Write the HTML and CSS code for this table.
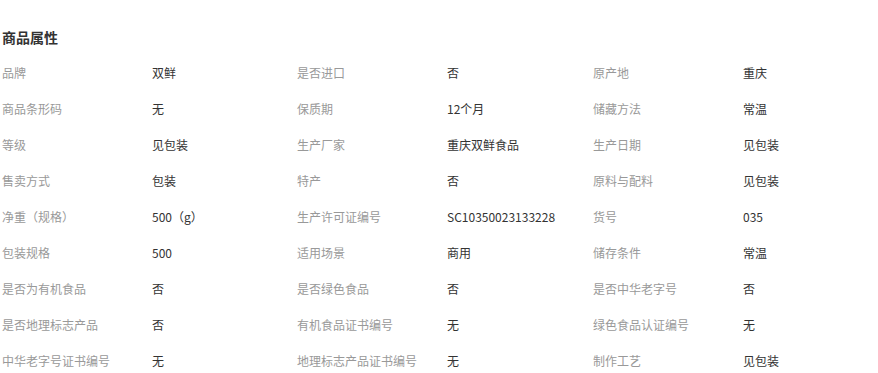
FILE: index.html
```html
<!DOCTYPE html>
<html lang="zh-CN">
<head>
<meta charset="utf-8">
<title>商品属性</title>
<link rel="stylesheet" href="styles.css">
</head>
<body>
<section class="attrs">
  <h3 class="attrs-title">商品属性</h3>
  <div class="attrs-grid">
    <span class="k">品牌</span><span class="v">双鲜</span>
    <span class="k">是否进口</span><span class="v">否</span>
    <span class="k">原产地</span><span class="v">重庆</span>

    <span class="k">商品条形码</span><span class="v">无</span>
    <span class="k">保质期</span><span class="v">12个月</span>
    <span class="k">储藏方法</span><span class="v">常温</span>

    <span class="k">等级</span><span class="v">见包装</span>
    <span class="k">生产厂家</span><span class="v">重庆双鲜食品</span>
    <span class="k">生产日期</span><span class="v">见包装</span>

    <span class="k">售卖方式</span><span class="v">包装</span>
    <span class="k">特产</span><span class="v">否</span>
    <span class="k">原料与配料</span><span class="v">见包装</span>

    <span class="k">净重（规格）</span><span class="v">500（g）</span>
    <span class="k">生产许可证编号</span><span class="v">SC10350023133228</span>
    <span class="k">货号</span><span class="v">035</span>

    <span class="k">包装规格</span><span class="v">500</span>
    <span class="k">适用场景</span><span class="v">商用</span>
    <span class="k">储存条件</span><span class="v">常温</span>

    <span class="k">是否为有机食品</span><span class="v">否</span>
    <span class="k">是否绿色食品</span><span class="v">否</span>
    <span class="k">是否中华老字号</span><span class="v">否</span>

    <span class="k">是否地理标志产品</span><span class="v">否</span>
    <span class="k">有机食品证书编号</span><span class="v">无</span>
    <span class="k">绿色食品认证编号</span><span class="v">无</span>

    <span class="k">中华老字号证书编号</span><span class="v">无</span>
    <span class="k">地理标志产品证书编号</span><span class="v">无</span>
    <span class="k">制作工艺</span><span class="v">见包装</span>
  </div>
</section>
</body>
</html>
```

FILE: styles.css
```css
html, body {
  margin: 0;
  padding: 0;
  background: #fff;
}
body {
  font-family: "Noto Sans CJK SC", "Liberation Sans", sans-serif;
  font-size: 12px;
  color: #333;
}
.attrs {
  padding: 27px 0 0 2px;
}
.attrs-title {
  margin: 0 0 7px 0;
  font-size: 14px;
  line-height: 20px;
  font-weight: bold;
  color: #333;
}
.attrs-grid {
  display: grid;
  grid-template-columns: 150px 145px 150px 146px 150px 1fr;
  grid-auto-rows: 36px;
  align-items: center;
}
.k {
  color: #999;
  white-space: nowrap;
}
.v {
  color: #333;
  white-space: nowrap;
}
```
